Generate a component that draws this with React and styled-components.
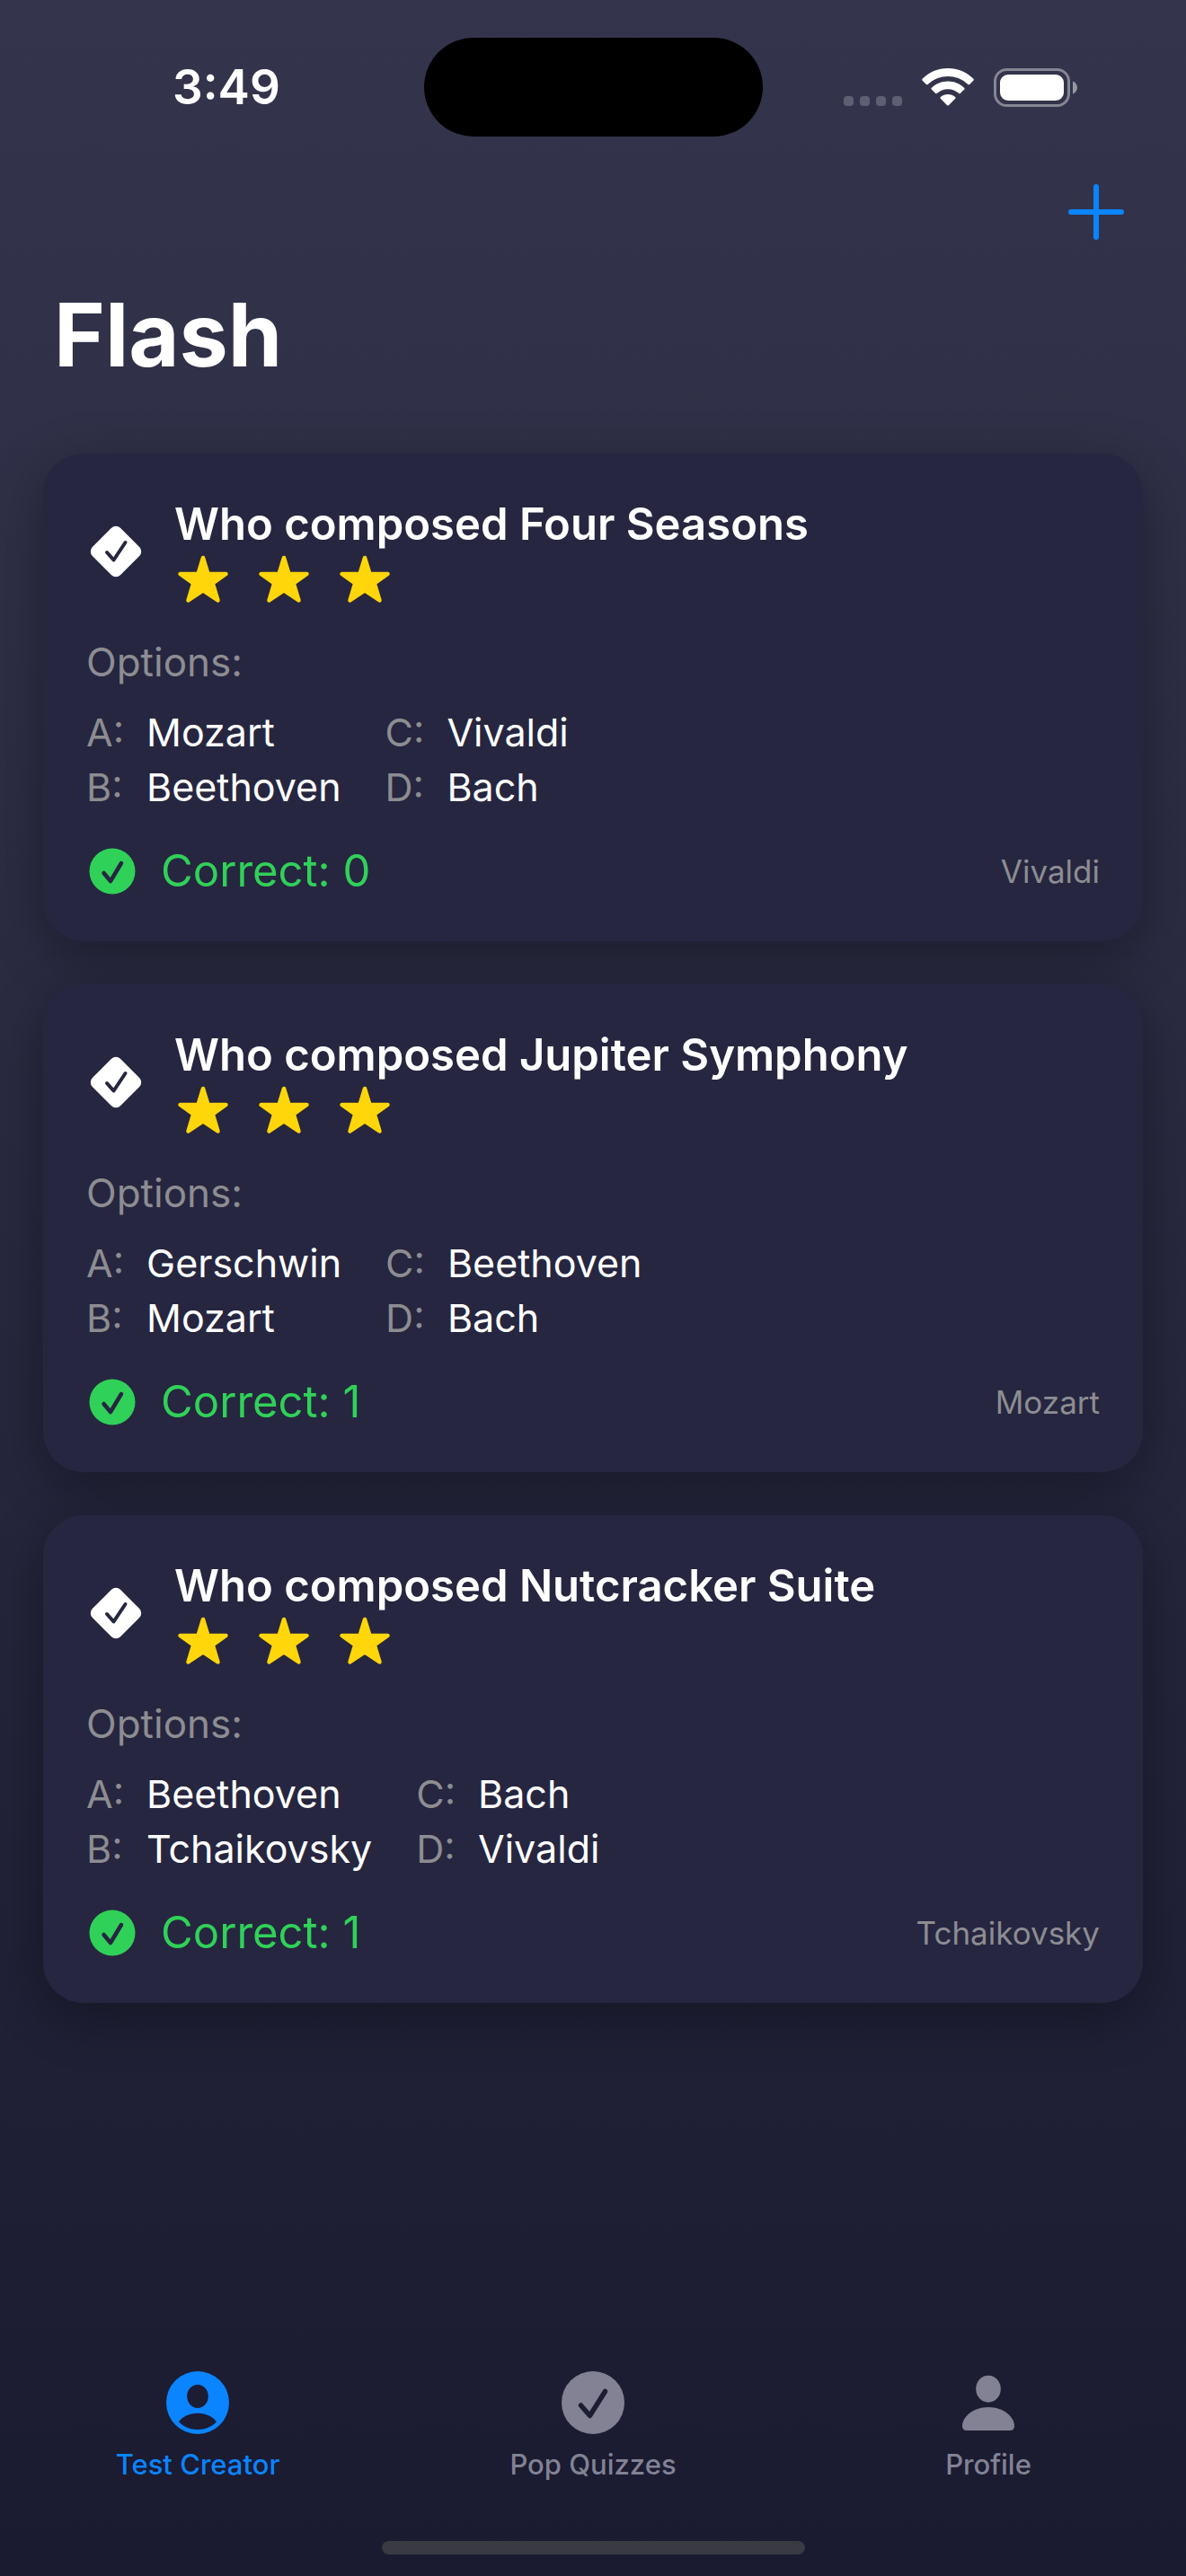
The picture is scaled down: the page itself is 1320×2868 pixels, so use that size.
import React from "react";
import styled, { createGlobalStyle } from "styled-components";

const GlobalStyle = createGlobalStyle`
  *, *::before, *::after { box-sizing: border-box; }
  body {
    margin: 0;
    background: #1a1a2e;
    font-family: Inter, "Liberation Sans", sans-serif;
    color: #ffffff;
  }
  h1, h2, p, ul { margin: 0; padding: 0; }
  svg { display: block; flex: none; }
`;

const Screen = styled.div`
  min-height: 100vh;
  display: flex;
  flex-direction: column;
  background: linear-gradient(#34344c, #1a1a30);
`;

const StatusBar = styled.div`
  display: grid;
  grid-template-columns: 1fr 377px 1fr;
  align-items: center;
  padding-top: 42px;
`;

const Clock = styled.time`
  padding-left: 192px;
  font-size: 53px;
  line-height: 64px;
  font-weight: 600;
`;

const Island = styled.div`
  height: 110px;
  border-radius: 55px;
  background: #000000;
`;

const StatusIcons = styled.div`
  display: flex;
  justify-content: flex-end;
  align-items: center;
  gap: 22px;
  padding-right: 120px;
`;

const Toolbar = styled.div`
  display: flex;
  justify-content: flex-end;
  align-items: center;
  height: 168px;
  padding-right: 64px;
`;

const AddButton = styled.button`
  padding: 5px;
  border: 0;
  background: none;
  color: #0a84ff;
  cursor: pointer;
`;

const Title = styled.h1`
  padding: 0 60px;
  font-size: 97px;
  line-height: 106px;
  font-weight: 700;
`;

const CardList = styled.main`
  display: flex;
  flex-direction: column;
  gap: 48px;
  padding: 79px 48px;
`;

const Card = styled.article`
  display: flex;
  flex-direction: column;
  padding: 48px;
  border-radius: 45px;
  background: #262640;
  box-shadow: 0 15px 60px rgba(0, 0, 0, 0.3);
`;

const CardHeader = styled.header`
  display: flex;
  align-items: center;
  gap: 32px;
`;

const Question = styled.h2`
  font-size: 49px;
  line-height: 61px;
  font-weight: 600;
`;

const Stars = styled.div`
  display: flex;
  align-items: center;
  gap: 26px;
  height: 61px;
`;

const OptionsLabel = styled.p`
  margin-top: 35px;
  font-size: 44px;
  line-height: 54px;
  color: #8d8d92;
`;

const Options = styled.div`
  display: grid;
  grid-template-columns: repeat(2, max-content max-content);
  gap: 7px 25px;
  margin-top: 24px;
  font-size: 43px;
  line-height: 54px;
`;

const OptionKey = styled.span`
  padding-left: ${(p) => (p.$second ? "24px" : "0")};
  color: #8d8d92;
`;

const CardFooter = styled.footer`
  display: flex;
  align-items: center;
  gap: 25px;
  margin-top: 36px;
`;

const Score = styled.span`
  font-size: 49px;
  line-height: 61px;
  color: #30d158;
`;

const Answer = styled.span`
  margin-left: auto;
  font-size: 35px;
  line-height: 44px;
  color: #8d8d92;
`;

const TabBar = styled.nav`
  display: grid;
  grid-template-columns: repeat(3, 1fr);
  margin-top: auto;
`;

const Tab = styled.button`
  display: flex;
  flex-direction: column;
  align-items: center;
  gap: 16px;
  padding: 0;
  border: 0;
  background: none;
  font-family: inherit;
  font-size: 31px;
  line-height: 36px;
  font-weight: 500;
  color: ${(p) => (p.$active ? "#0a84ff" : "#828294")};
  cursor: pointer;
`;

const HomeIndicator = styled.div`
  width: 471px;
  height: 15px;
  margin: 67px auto 24px;
  border-radius: 8px;
  background: #3a3a43;
`;

const SignalDots = () => (
  <svg width="65" height="42" viewBox="0 0 65 42" aria-hidden="true">
    {[0, 18, 36, 54].map((x) => (
      <rect key={x} x={x} y="31" width="11" height="11" rx="4" fill="#5f5f73" />
    ))}
  </svg>
);

const WifiIcon = () => (
  <svg width="58" height="42" viewBox="0 0 58 42" fill="#fff" aria-hidden="true">
    <path d="M29 0C40 0 50 4.400 57.500 11.800Q58.200 12.600 57.500 13.400L53 18Q52.200 18.700 51.400 18A32.500 32.500 0 0 0 6.600 18Q5.800 18.700 5 18L0.500 13.400Q-0.200 12.600 0.500 11.800C8 4.400 18 0 29 0Z" />
    <path d="M29 14.500C36 14.500 42.500 17.200 47.300 21.900Q48 22.700 47.300 23.500L42.700 28Q42 28.700 41.200 28A18 18 0 0 0 16.800 28Q16 28.700 15.300 28L10.700 23.500Q10 22.700 10.700 21.900C15.500 17.200 22 14.500 29 14.500Z" />
    <path d="M29 29C32 29 35 30.200 37.200 32.100Q38 32.900 37.200 33.700L29.800 41.200Q29 42 28.200 41.200L20.800 33.700Q20 32.900 20.800 32.100C23 30.200 26 29 29 29Z" />
  </svg>
);

const BatteryIcon = () => (
  <svg width="94" height="43" viewBox="0 0 94 43" aria-hidden="true">
    <rect x="1.500" y="1.500" width="82" height="40" rx="13" fill="none" stroke="#858594" strokeWidth="3" />
    <rect x="7" y="7" width="71" height="29" rx="9" fill="#fff" />
    <path d="M88 14.500C91 15.500 93 18.300 93 21.500S91 27.500 88 28.500Z" fill="#9797a3" />
  </svg>
);

const PlusIcon = () => (
  <svg width="62" height="62" viewBox="0 0 62 62" aria-hidden="true">
    <path d="M31 3V59M3 31H59" stroke="currentColor" strokeWidth="6" strokeLinecap="round" />
  </svg>
);

const DiamondCheck = () => (
  <svg width="66" height="58" viewBox="0 0 66 58" aria-hidden="true">
    <rect x="11" y="7" width="44" height="44" rx="7" transform="rotate(45 33 29)" fill="#fff" />
    <path d="M23 30L30.500 38.500L43.500 19" fill="none" stroke="#262640" strokeWidth="4" strokeLinecap="round" strokeLinejoin="round" />
  </svg>
);

const StarIcon = () => (
  <svg width="64" height="54" viewBox="-32 0 64 54" aria-hidden="true">
    <path
      d="M0 3L5.500 21H25.500L10.800 31.500L16.500 50.500L0 39.500L-16.500 50.500L-10.800 31.500L-25.500 21H-5.500Z"
      fill="#ffd60a"
      stroke="#ffd60a"
      strokeWidth="4.500"
      strokeLinejoin="round"
    />
  </svg>
);

const GreenCheck = () => (
  <svg width="58" height="52" viewBox="0 0 58 52" aria-hidden="true">
    <circle cx="29" cy="26" r="25.500" fill="#30d158" />
    <path d="M19.500 28L27 37L39 17" fill="none" stroke="#262640" strokeWidth="4.500" strokeLinecap="round" strokeLinejoin="round" />
  </svg>
);

const PersonCircle = () => (
  <svg width="70" height="70" viewBox="0 0 70 70" aria-hidden="true">
    <path
      fill="currentColor"
      fillRule="evenodd"
      d="M35 0A35 35 0 1 1 35 70A35 35 0 1 1 35 0ZM35 15C28.500 15 23.200 20.500 23.200 27.800C23.200 35.200 28.500 41 35 41S46.800 35.200 46.800 27.800C46.800 20.500 41.500 15 35 15ZM35 46.700C25.500 46.700 17.500 51 14 56.300C19 62 27 65 35 65S51 62 56 56.300C52.500 51 44.500 46.700 35 46.700Z"
    />
  </svg>
);

const CheckCircle = () => (
  <svg width="70" height="70" viewBox="0 0 70 70" aria-hidden="true">
    <circle cx="35" cy="35" r="35" fill="currentColor" />
    <path d="M21.500 38L31.500 49.500L48.500 22.500" fill="none" stroke="#1c1c33" strokeWidth="5.500" strokeLinecap="round" strokeLinejoin="round" />
  </svg>
);

const PersonIcon = () => (
  <svg width="70" height="70" viewBox="0 0 70 70" fill="currentColor" aria-hidden="true">
    <ellipse cx="35" cy="19.700" rx="13.800" ry="15" />
    <path d="M35 40C52 40 64 51 64 61Q64 66 59 66H11Q6 66 6 61C6 51 18 40 35 40Z" />
  </svg>
);

const quizzes = [
  { question: "Who composed Four Seasons", options: ["Mozart", "Beethoven", "Vivaldi", "Bach"], correct: 0, answer: "Vivaldi" },
  { question: "Who composed Jupiter Symphony", options: ["Gerschwin", "Mozart", "Beethoven", "Bach"], correct: 1, answer: "Mozart" },
  { question: "Who composed Nutcracker Suite", options: ["Beethoven", "Tchaikovsky", "Bach", "Vivaldi"], correct: 1, answer: "Tchaikovsky" },
];

const tabs = [
  { label: "Test Creator", Icon: PersonCircle },
  { label: "Pop Quizzes", Icon: CheckCircle },
  { label: "Profile", Icon: PersonIcon },
];

function QuizCard({ quiz }) {
  const [a, b, c, d] = quiz.options;
  return (
    <Card>
      <CardHeader>
        <DiamondCheck />
        <div>
          <Question>{quiz.question}</Question>
          <Stars role="img" aria-label="3 stars">
            <StarIcon />
            <StarIcon />
            <StarIcon />
          </Stars>
        </div>
      </CardHeader>
      <OptionsLabel>Options:</OptionsLabel>
      <Options>
        <OptionKey>A:</OptionKey>
        <span>{a}</span>
        <OptionKey $second>C:</OptionKey>
        <span>{c}</span>
        <OptionKey>B:</OptionKey>
        <span>{b}</span>
        <OptionKey $second>D:</OptionKey>
        <span>{d}</span>
      </Options>
      <CardFooter>
        <GreenCheck />
        <Score>Correct: {quiz.correct}</Score>
        <Answer>{quiz.answer}</Answer>
      </CardFooter>
    </Card>
  );
}

export default function App() {
  const [active, setActive] = React.useState("Test Creator");
  return (
    <>
      <GlobalStyle />
      <Screen>
        <StatusBar>
          <Clock>3:49</Clock>
          <Island />
          <StatusIcons>
            <SignalDots />
            <WifiIcon />
            <BatteryIcon />
          </StatusIcons>
        </StatusBar>
        <Toolbar>
          <AddButton type="button" aria-label="Add question">
            <PlusIcon />
          </AddButton>
        </Toolbar>
        <Title>Flash</Title>
        <CardList>
          {quizzes.map((quiz) => (
            <QuizCard key={quiz.question} quiz={quiz} />
          ))}
        </CardList>
        <TabBar>
          {tabs.map(({ label, Icon }) => (
            <Tab key={label} type="button" $active={label === active} onClick={() => setActive(label)}>
              <Icon />
              {label}
            </Tab>
          ))}
        </TabBar>
        <HomeIndicator />
      </Screen>
    </>
  );
}
